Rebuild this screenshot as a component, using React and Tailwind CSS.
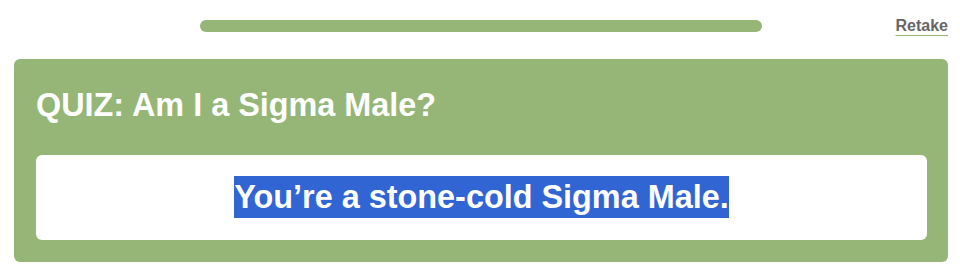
const App = () => {
  return (
    <div className="w-[960px] h-[272px] bg-white pl-[14px] pr-[12px] font-['Liberation_Sans',Arial,sans-serif]">
      <div className="flex items-center h-[59px] pb-[8px]">
        <div className="ml-[186px] w-[562px] h-[12px] rounded-full bg-[#95b676]"></div>
        <a
          href="#"
          className="ml-auto text-[16px] leading-[20px] font-bold text-[#666666] underline decoration-[#95b676] underline-offset-[4px]"
        >
          Retake
        </a>
      </div>
      <div className="rounded-[6px] bg-[#95b676] pl-[22px] pr-[21px] pt-[28px] pb-[22px]">
        <h1 className="text-[32.4px] leading-[36px] font-bold text-white">QUIZ: Am I a Sigma Male?</h1>
        <div className="mt-[32px] rounded-[6px] bg-white py-[22px] text-center">
          <p className="text-[32.4px] leading-[41px] font-bold">
            <span className="bg-[#3165d4] py-[3px] text-white">You’re a stone-cold Sigma Male.</span>
          </p>
        </div>
      </div>
    </div>
  );
};

export default App;
